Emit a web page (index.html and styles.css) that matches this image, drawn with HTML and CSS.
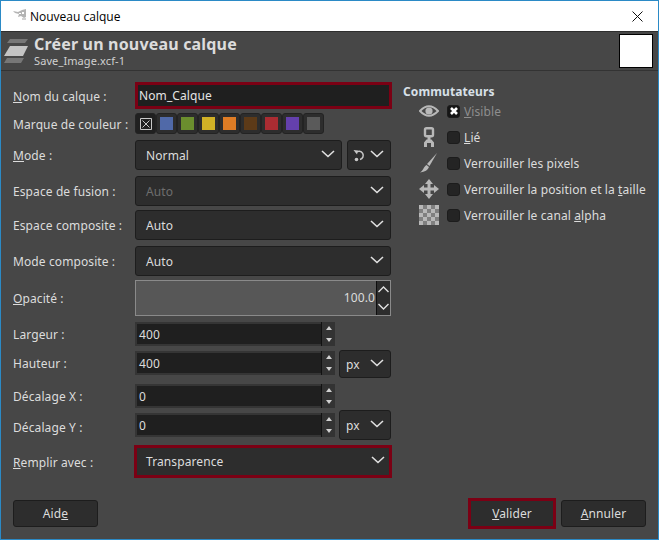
FILE: index.html
```html
<!DOCTYPE html>
<html lang="fr">
<head>
	<meta charset="UTF-8">
	<title>Nouveau calque</title>
	<link rel="stylesheet" href="styles.css">
</head>
<body>
	<div class="window">
		<div class="titlebar">
			<svg class="app-icon" width="14" height="12" viewBox="0 0 14 12">
				<path d="M0 2 L5 3 L9 1 L13 0 L13 8 L11 9 L8 7 L5 8 L6 5 L2 4 Z" fill="#b4b4b4"/>
				<path d="M6 4 h2 v1 h-2 z M9 3 h2 v2 h-2 z" fill="#fff"/>
				<path d="M9 9 h4 v2 h-4 z" fill="#d2d2d2"/>
			</svg>
			<span class="title-text">Nouveau calque</span>
			<svg class="close-icon" width="11" height="11" viewBox="0 0 11 11">
				<path d="M0.5 0.5 L10.5 10.5 M10.5 0.5 L0.5 10.5" stroke="#111" stroke-width="1" fill="none"/>
			</svg>
		</div>

		<div class="header">
			<svg class="layer-icon" width="24" height="26" viewBox="0 0 24 26">
				<path d="M6 1 H24 L21 5 H3 Z" fill="#777"/>
				<path d="M6 8 H24 L19 18 H0 Z" fill="#c4c4c4"/>
				<path d="M3 20 H20 L17 25 H0 Z" fill="#777"/>
			</svg>
			<div class="header-text">
				<div class="header-title">Créer un nouveau calque</div>
				<div class="header-sub">Save_Image.xcf-1</div>
			</div>
			<div class="preview"></div>
		</div>

		<div class="content">
			<div class="form">
				<div class="row row-name">
					<label class="lbl"><u>N</u>om du calque :</label>
					<div class="entry focus">Nom_Calque</div>
				</div>
				<div class="row row-tags">
					<label class="lbl">Marque de couleur :</label>
					<div class="tags">
						<span class="tag tag-none"><svg width="12" height="12" viewBox="0 0 12 12"><path d="M0.5 0.5 H11.5 V11.5 H0.5 Z M2.5 2.5 L9.5 9.5 M9.5 2.5 L2.5 9.5" stroke="#c8c8c8" fill="none"/></svg></span>
						<span class="tag"><i class="c-blue"></i></span>
						<span class="tag"><i class="c-green"></i></span>
						<span class="tag"><i class="c-yellow"></i></span>
						<span class="tag"><i class="c-orange"></i></span>
						<span class="tag"><i class="c-brown"></i></span>
						<span class="tag"><i class="c-red"></i></span>
						<span class="tag"><i class="c-violet"></i></span>
						<span class="tag"><i class="c-gray"></i></span>
					</div>
				</div>
				<div class="row row-mode">
					<label class="lbl"><u>M</u>ode :</label>
					<div class="combo grow"><span>Normal</span><svg class="chev" width="14" height="8" viewBox="0 0 14 8"><path d="M1 1 L7 6.5 L13 1" stroke="#e0e0e0" stroke-width="1.6" fill="none"/></svg></div>
					<div class="combo mode-switch">
						<svg width="13" height="13" viewBox="0 0 13 13"><path d="M3 3.500 A4.200 4.200 0 1 1 7 10.500" stroke="#c8c8c8" stroke-width="1.500" fill="none"/><path d="M0.500 1 L5 1.500 L4 5.500 Z" fill="#c8c8c8"/><circle cx="3.500" cy="10.500" r="1.800" fill="#c8c8c8"/></svg>
						<svg class="chev" width="14" height="8" viewBox="0 0 14 8"><path d="M1 1 L7 6.5 L13 1" stroke="#e0e0e0" stroke-width="1.6" fill="none"/></svg>
					</div>
				</div>
				<div class="row row-blend">
					<label class="lbl">Espace de fusion :</label>
					<div class="combo grow"><span class="dim">Auto</span><svg class="chev" width="14" height="8" viewBox="0 0 14 8"><path d="M1 1 L7 6.5 L13 1" stroke="#e0e0e0" stroke-width="1.6" fill="none"/></svg></div>
				</div>
				<div class="row row-comp">
					<label class="lbl">Espace composite :</label>
					<div class="combo grow"><span>Auto</span><svg class="chev" width="14" height="8" viewBox="0 0 14 8"><path d="M1 1 L7 6.5 L13 1" stroke="#e0e0e0" stroke-width="1.6" fill="none"/></svg></div>
				</div>
				<div class="row row-compmode">
					<label class="lbl">Mode composite :</label>
					<div class="combo grow"><span>Auto</span><svg class="chev" width="14" height="8" viewBox="0 0 14 8"><path d="M1 1 L7 6.5 L13 1" stroke="#e0e0e0" stroke-width="1.6" fill="none"/></svg></div>
				</div>
				<div class="row row-opacity">
					<label class="lbl"><u>O</u>pacité :</label>
					<div class="scale">
						<div class="scale-val">100.0</div>
						<div class="scale-btns">
							<svg width="11" height="7" viewBox="0 0 11 7"><path d="M0.5 6 L5.5 1 L10.5 6" stroke="#e0e0e0" stroke-width="1.4" fill="none"/></svg>
							<svg width="11" height="7" viewBox="0 0 11 7"><path d="M0.5 1 L5.5 6 L10.5 1" stroke="#e0e0e0" stroke-width="1.4" fill="none"/></svg>
						</div>
					</div>
				</div>
				<div class="row row-width">
					<label class="lbl">Largeur :</label>
					<div class="spin"><span class="spin-val">400</span><div class="spin-btns"><b class="up"></b><b class="down"></b></div></div>
				</div>
				<div class="row row-height">
					<label class="lbl">Hauteur :</label>
					<div class="spin"><span class="spin-val">400</span><div class="spin-btns"><b class="up"></b><b class="down"></b></div></div>
					<div class="combo unit"><span>px</span><svg class="chev" width="14" height="8" viewBox="0 0 14 8"><path d="M1 1 L7 6.5 L13 1" stroke="#e0e0e0" stroke-width="1.6" fill="none"/></svg></div>
				</div>
				<div class="row row-x">
					<label class="lbl">Décalage X :</label>
					<div class="spin"><span class="spin-val">0</span><div class="spin-btns"><b class="up"></b><b class="down"></b></div></div>
				</div>
				<div class="row row-y">
					<label class="lbl">Décalage Y :</label>
					<div class="spin"><span class="spin-val">0</span><div class="spin-btns"><b class="up"></b><b class="down"></b></div></div>
					<div class="combo unit"><span>px</span><svg class="chev" width="14" height="8" viewBox="0 0 14 8"><path d="M1 1 L7 6.5 L13 1" stroke="#e0e0e0" stroke-width="1.6" fill="none"/></svg></div>
				</div>
				<div class="row row-fill">
					<label class="lbl"><u>R</u>emplir avec :</label>
					<div class="combo grow focus"><span>Transparence</span><svg class="chev" width="14" height="8" viewBox="0 0 14 8"><path d="M1 1 L7 6.5 L13 1" stroke="#e0e0e0" stroke-width="1.6" fill="none"/></svg></div>
				</div>
			</div>

			<div class="switches">
				<div class="switches-title">Commutateurs</div>
				<div class="switch">
					<svg class="sw-icon" width="20" height="20" viewBox="0 0 20 20"><path d="M1 10 Q10 0.5 19 10 Q10 19.5 1 10 Z" stroke="#b8b8b8" stroke-width="2" fill="none"/><circle cx="10" cy="10" r="3.600" fill="#b8b8b8"/></svg>
					<span class="check on"><svg width="10" height="10" viewBox="0 0 10 10"><path d="M2 2 L8 8 M8 2 L2 8" stroke="#fff" stroke-width="2.600"/></svg></span>
					<span class="sw-text dim2"><u>V</u>isible</span>
				</div>
				<div class="switch">
					<svg class="sw-icon" width="20" height="20" viewBox="0 0 20 20"><rect x="6" y="1.200" width="8" height="8" rx="1.500" stroke="#b8b8b8" stroke-width="2.400" fill="none"/><path d="M8.500 10 H11.500 V13 H8.500 Z" fill="#b8b8b8"/><path d="M5 20 V15.500 L7.500 12.500 H12.500 L15 15.500 V20 H12 V16 H8 V20 Z" fill="#b8b8b8"/></svg>
					<span class="check"></span>
					<span class="sw-text"><u>L</u>ié</span>
				</div>
				<div class="switch">
					<svg class="sw-icon" width="20" height="20" viewBox="0 0 20 20"><path d="M18 0 L8 11 L10.5 13 Z" fill="#b8b8b8"/><path d="M7.5 12 L10 14 C9 17 6 19 1 19.5 C4 18 4.500 14 7.500 12 Z" fill="#b8b8b8"/></svg>
					<span class="check"></span>
					<span class="sw-text">Verrouiller les pixels</span>
				</div>
				<div class="switch">
					<svg class="sw-icon" width="20" height="20" viewBox="0 0 20 20"><path d="M10 0 L14 5 H11.500 V8.500 H15 V6 L20 10 L15 14 V11.500 H11.500 V15 H14 L10 20 L6 15 H8.500 V11.500 H5 V14 L0 10 L5 6 V8.500 H8.500 V5 H6 Z" fill="#b8b8b8"/></svg>
					<span class="check"></span>
					<span class="sw-text">Verrouiller la position et la <u>t</u>aille</span>
				</div>
				<div class="switch">
					<svg class="sw-icon" width="20" height="20" viewBox="0 0 20 20">
						<rect width="20" height="20" fill="#808080"/>
						<path d="M0 0 h4 v4 h-4 z M8 0 h4 v4 h-4 z M16 0 h4 v4 h-4 z M4 4 h4 v4 h-4 z M12 4 h4 v4 h-4 z M0 8 h4 v4 h-4 z M8 8 h4 v4 h-4 z M16 8 h4 v4 h-4 z M4 12 h4 v4 h-4 z M12 12 h4 v4 h-4 z M0 16 h4 v4 h-4 z M8 16 h4 v4 h-4 z M16 16 h4 v4 h-4 z" fill="#b8b8b8"/>
					</svg>
					<span class="check"></span>
					<span class="sw-text">Verrouiller le canal <u>a</u>lpha</span>
				</div>
			</div>
		</div>

		<div class="actions">
			<div class="btn btn-help">Aid<u>e</u></div>
			<div class="btn btn-ok focus"><u>V</u>alider</div>
			<div class="btn btn-cancel"><u>A</u>nnuler</div>
		</div>
	</div>
</body>
</html>
```

FILE: styles.css
```css
html, body {
	margin: 0;
	padding: 0;
}

body {
	width: 659px;
	height: 540px;
	overflow: hidden;
	font-family: "Noto Sans", sans-serif;
	font-size: 12px;
	letter-spacing: 0.1px;
	color: #dcdcdc;
}

u {
	text-underline-offset: 1px;
}

.window {
	box-sizing: border-box;
	width: 659px;
	height: 540px;
	border: 1px solid #2b8ac6;
	background: #474747;
	display: flex;
	flex-direction: column;
}

.titlebar {
	height: 30px;
	flex: none;
	background: #fff;
	display: flex;
	align-items: center;
	padding: 0 15px 0 12px;
	color: #000;
	font-family: "Open Sans", sans-serif;
	font-size: 12px;
	letter-spacing: 0;
}

.app-icon {
	margin-right: 3px;
	margin-top: -3px;
}

.title-text {
	flex: 1;
}

.header {
	box-sizing: border-box;
	height: 40px;
	flex: none;
	border-top: 1px solid #2e2e2e;
	border-bottom: 1px solid #333;
	display: flex;
	align-items: center;
	padding: 0 5px 0 3px;
}

.layer-icon {
	margin-right: 6px;
}

.header-text {
	flex: 1;
}

.header-title {
	font-size: 16px;
	font-weight: bold;
	letter-spacing: 0.18px;
	line-height: 18px;
	color: #dcdcdc;
}

.header-sub {
	font-size: 11px;
	line-height: 12px;
	margin-top: 2px;
	color: #d0d0d0;
}

.preview {
	box-sizing: border-box;
	width: 34px;
	height: 34px;
	background: #fff;
	border: 1px solid #000;
}

.content {
	display: flex;
	flex: 1;
	padding: 0 0 0 12px;
}

.form {
	width: 379px;
	padding-top: 11px;
}

.row {
	display: flex;
	align-items: center;
}

.lbl {
	width: 121px;
	flex: none;
	padding-top: 1px;
}

.row-name { height: 27px; }
.row-tags { height: 21px; margin-top: 4px; }
.row-mode { height: 30px; margin-top: 6px; }
.row-blend { height: 30px; margin-top: 6px; }
.row-comp { height: 30px; margin-top: 4px; }
.row-compmode { height: 30px; margin-top: 6px; }
.row-opacity { height: 36px; margin-top: 4px; }
.row-width { height: 24px; margin-top: 6px; }
.row-height { height: 28px; margin-top: 4px; }
.row-x { height: 24px; margin-top: 6px; }
.row-y { height: 30px; margin-top: 2px; }
.row-fill { height: 33px; margin-top: 5px; }

.row-height .lbl {
	padding-top: 0;
	padding-bottom: 1px;
}

.row-height .spin {
	margin-top: -2px;
}

.row-y .lbl {
	padding-top: 5px;
}

.entry {
	box-sizing: border-box;
	width: 257px;
	margin-left: 1px;
	height: 100%;
	background: #1f1f1f;
	line-height: 21px;
	padding-left: 1px;
	color: #e4e4e4;
}

.tags {
	display: flex;
	margin-left: 1px;
	gap: 0;
}

.tag {
	box-sizing: border-box;
	width: 21px;
	height: 21px;
	background: #2d2d2d;
	border: 1px solid #232323;
	border-radius: 3px;
	display: flex;
	align-items: center;
	justify-content: center;
}

.tag-none {
	background: #202020;
}

.tag i {
	display: block;
	width: 13px;
	height: 13px;
}

.c-blue { background: #5069a8; }
.c-green { background: #6b8e2e; }
.c-yellow { background: #d0b126; }
.c-orange { background: #de7c25; }
.c-brown { background: #5c3a18; }
.c-red { background: #aa2c32; }
.c-violet { background: #6440ad; }
.c-gray { background: #5a5a5a; }

.combo {
	box-sizing: border-box;
	height: 100%;
	background: #2d2d2d;
	border: 1px solid #1d1d1d;
	border-radius: 3px;
	display: flex;
	align-items: center;
	justify-content: space-between;
	padding: 0 6px 0 10px;
	color: #dcdcdc;
}

.grow {
	flex: 1;
	margin-left: 1px;
	margin-right: 1px;
}

.chev {
	margin-top: -3px;
}

.focus {
	border: 3px solid #7b0014;
}

.row-fill .combo {
	margin-left: 0;
	margin-right: 0;
	border-radius: 0;
	padding: 0 4px 0 9px;
}

.mode-switch {
	width: 44px;
	flex: none;
	margin-left: 4px;
	margin-right: 1px;
	padding: 0 6px 0 5px;
}

.unit {
	width: 52px;
	flex: none;
	margin-left: 4px;
	margin-right: 1px;
	padding: 0 6px 0 6px;
}

.dim {
	color: #6e6e6e;
}

.dim2 {
	color: #8e8e8e;
}

.scale {
	box-sizing: border-box;
	flex: 1;
	height: 100%;
	margin-left: 1px;
	margin-right: 1px;
	display: flex;
	background: #575757;
	border: 1px solid #8a8a8a;
}

.scale-val {
	flex: 1;
	text-align: right;
	line-height: 34px;
	padding-right: 1px;
}

.scale-btns {
	width: 13px;
	background: #2d2d2d;
	border-left: 1px solid #0e0e0e;
	display: flex;
	flex-direction: column;
	align-items: center;
	justify-content: space-around;
}

.spin {
	box-sizing: border-box;
	width: 200px;
	height: 24px;
	margin-left: 1px;
	background: #1f1f1f;
	border: 2px solid #353535;
	display: flex;
	align-items: center;
	justify-content: space-between;
}

.spin-val {
	padding-left: 2px;
}

.spin-btns {
	width: 13px;
	height: 24px;
	background: #333;
	border-left: 1px solid #111;
	margin-right: -2px;
	display: flex;
	flex-direction: column;
	align-items: center;
	justify-content: space-around;
}

.spin-btns b {
	display: block;
	width: 0;
	height: 0;
	border-left: 3.5px solid transparent;
	border-right: 3.5px solid transparent;
}

.spin-btns .up {
	border-bottom: 4px solid #d0d0d0;
}

.spin-btns .down {
	border-top: 4px solid #d0d0d0;
}

.switches {
	width: 250px;
	padding-top: 14px;
	margin-left: 11px;
}

.switches-title {
	font-weight: bold;
	color: #d8e0e8;
	line-height: 14px;
	margin-bottom: -1px;
}

.switch {
	display: flex;
	align-items: center;
	height: 26px;
	padding-left: 16px;
	white-space: nowrap;
}

.sw-icon {
	margin-right: 8px;
	flex: none;
}

.check {
	box-sizing: border-box;
	width: 13px;
	height: 13px;
	background: #242424;
	border: 1px solid #1c1c1c;
	border-radius: 3px;
	margin-right: 4px;
	display: flex;
	align-items: center;
	justify-content: center;
}

.check.on {
	background: #161616;
}

.actions {
	display: flex;
	align-items: center;
	height: 31px;
	padding: 0 12px;
	margin-bottom: 10px;
	flex: none;
}

.btn {
	box-sizing: border-box;
	height: 27px;
	background: #2d2d2d;
	border: 1px solid #1d1d1d;
	border-radius: 3px;
	text-align: center;
	line-height: 25px;
	color: #dcdcdc;
}

.btn-help {
	width: 85px;
	margin-right: auto;
}

.btn-ok {
	width: 88px;
	height: 31px;
	border: 3px solid #7b0014;
	border-radius: 0;
	line-height: 25px;
}

.btn-cancel {
	width: 85px;
	margin-left: 5px;
}
```
